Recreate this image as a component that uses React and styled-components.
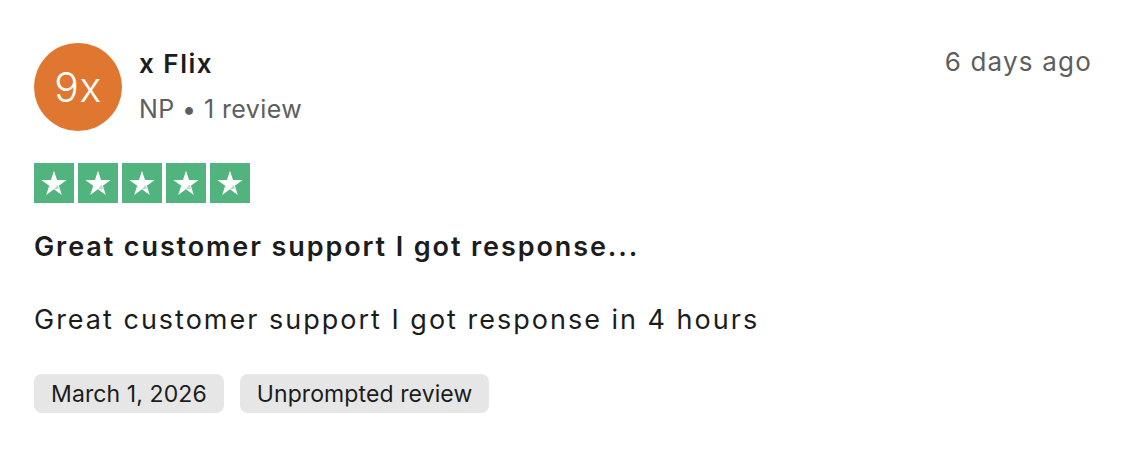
import styled, { createGlobalStyle } from 'styled-components';

const GlobalStyle = createGlobalStyle`
  body {
    margin: 0;
    background: #fff;
    font-family: Inter, "Noto Sans", sans-serif;
    color: #1c1c1c;
  }
`;

const Card = styled.article`
  width: 1144px;
  box-sizing: border-box;
  padding: 43px 52px 0 34px;
`;

const Header = styled.header`
  display: flex;
  align-items: flex-start;
`;

const Avatar = styled.div`
  width: 88px;
  height: 88px;
  border-radius: 50%;
  background: #e07730;
  color: #fff;
  display: flex;
  align-items: center;
  justify-content: center;
  font-size: 41px;
  font-weight: 300;
  letter-spacing: 0.5px;
  flex-shrink: 0;
`;

const Who = styled.div`
  margin-left: 17px;
  flex: 1;
  display: flex;
  flex-direction: column;
  gap: 14px;
  padding-top: 5px;
`;

const Name = styled.div`
  font-size: 26px;
  font-weight: 600;
  line-height: 32px;
  letter-spacing: 1.5px;
`;

const Meta = styled.div`
  font-size: 25px;
  line-height: 30px;
  color: #5e5e5e;
  letter-spacing: 0.4px;
`;

const Time = styled.time`
  font-size: 26px;
  line-height: 32px;
  color: #5e5e5e;
  letter-spacing: 1.2px;
  padding-top: 3px;
`;

const Stars = styled.div`
  display: flex;
  gap: 4px;
  margin-top: 32px;
`;

const StarBox = styled.span`
  width: 40px;
  height: 40px;
  background: #51b47e;
  display: flex;
  align-items: center;
  justify-content: center;
`;

const Title = styled.h2`
  margin: 28px 0 0;
  font-size: 27px;
  font-weight: 600;
  line-height: 32px;
  letter-spacing: 1.9px;
`;

const Body = styled.p`
  margin: 40px 0 0;
  font-size: 27px;
  line-height: 34px;
  letter-spacing: 2px;
`;

const Tags = styled.div`
  display: flex;
  gap: 16px;
  margin-top: 37px;
`;

const Tag = styled.span`
  height: 39px;
  box-sizing: border-box;
  padding: 0 17px;
  display: flex;
  align-items: center;
  background: #e6e6e6;
  border-radius: 8px;
  font-size: 23px;
  letter-spacing: 0.1px;
  color: #1c1c1c;
`;

const Star = () => (
  <svg width="28" height="28" viewBox="0 0 24 24">
    <path
      fill="#fff"
      d="M12 1.6l2.6 7.9h8.3l-6.7 4.9 2.5 7.9L12 17.4l-6.7 4.9 2.6-7.9L1.1 9.5h8.3z"
    />
    <path fill="#51b47e" fillOpacity="0.45" d="M15.1 13.6l1.1 3.4L12 17.4z" />
  </svg>
);

export default function App() {
  return (
    <>
      <GlobalStyle />
      <Card>
        <Header>
          <Avatar>9x</Avatar>
          <Who>
            <Name>x Flix</Name>
            <Meta>NP • 1 review</Meta>
          </Who>
          <Time>6 days ago</Time>
        </Header>
        <Stars>
          {[0, 1, 2, 3, 4].map((i) => (
            <StarBox key={i}>
              <Star />
            </StarBox>
          ))}
        </Stars>
        <Title>Great customer support I got response...</Title>
        <Body>Great customer support I got response in 4 hours</Body>
        <Tags>
          <Tag>March 1, 2026</Tag>
          <Tag>Unprompted review</Tag>
        </Tags>
      </Card>
    </>
  );
}
